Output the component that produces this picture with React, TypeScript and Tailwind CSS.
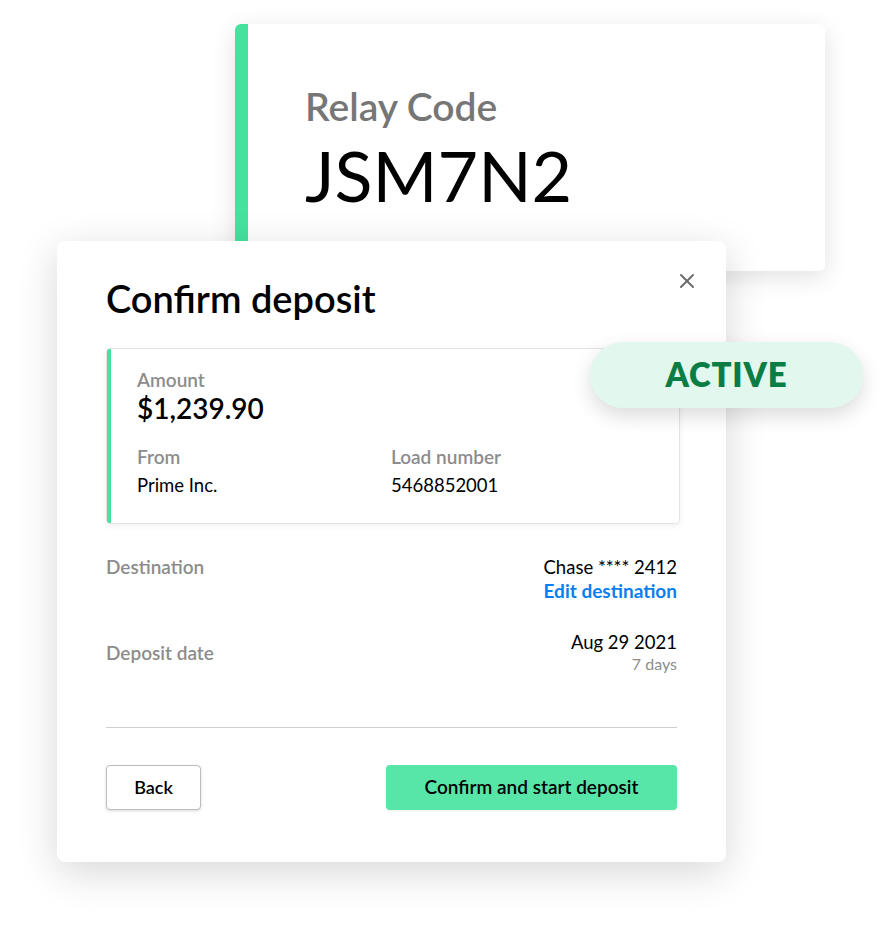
import React from 'react';
import { X } from 'lucide-react';

const font = { fontFamily: 'Lato, "Noto Sans", sans-serif' };

export default function App() {
  return (
    <div className="w-[888px] h-[928px] bg-white overflow-hidden pt-[24px]" style={font}>
      {/* Relay code card (behind) */}
      <div className="ml-[235px] w-[590px] h-[247px] bg-white rounded-md shadow-[0_6px_24px_rgba(0,0,0,0.12)] flex overflow-hidden">
        <div className="w-[13px] bg-[#45e29e]" />
        <div className="pl-[57px] pt-[59px]">
          <div className="text-[39px] leading-[46px] font-semibold text-[#767676]">Relay Code</div>
          <div className="text-[70px] leading-[80px] text-black mt-[6px]">JSM7N2</div>
        </div>
      </div>

      {/* Confirm deposit modal */}
      <div className="relative -mt-[30px] ml-[57px] w-[669px] h-[621px] bg-white rounded-lg shadow-[0_10px_40px_rgba(0,0,0,0.16)] pl-[49px] pr-[48px] pt-[34px]">
        <button className="absolute right-[27px] top-[28px] text-[#6b6b6b]">
          <X className="w-[24px] h-[24px]" strokeWidth={2} />
        </button>

        <h1 className="text-[38px] leading-[46px] font-semibold text-black">Confirm deposit</h1>

        <div className="mt-[27px] w-[574px] flex rounded border border-[#e3e3e3] shadow-[0_2px_6px_rgba(0,0,0,0.06)] overflow-hidden">
          <div className="w-[4px] bg-[#45e29e]" />
          <div className="flex-1 pl-[26px] pt-[20px] pb-[27px]">
            <div className="text-[19px] leading-[22px] font-semibold text-[#8c8c8c]">Amount</div>
            <div className="text-[28px] leading-[30px] font-semibold text-black mt-[2px]">$1,239.90</div>
            <div className="grid grid-cols-[254px_1fr] mt-[23px]">
              <div>
                <div className="text-[19px] leading-[22px] font-semibold text-[#8c8c8c]">From</div>
                <div className="text-[18.5px] leading-[22px] text-black mt-[6px]">Prime Inc.</div>
              </div>
              <div>
                <div className="text-[19px] leading-[22px] font-semibold text-[#8c8c8c]">Load number</div>
                <div className="text-[18.5px] leading-[22px] text-black mt-[6px]">5468852001</div>
              </div>
            </div>
          </div>
        </div>

        <div className="w-[571px] mt-[32px] flex justify-between">
          <div className="text-[19px] leading-[22px] font-semibold text-[#8c8c8c]">Destination</div>
          <div className="text-right">
            <div className="text-[18.5px] leading-[22px] text-black">Chase **** 2412</div>
            <div className="text-[19px] leading-[22px] font-bold text-[#0b7ff0] mt-[2px]">Edit destination</div>
          </div>
        </div>

        <div className="w-[571px] mt-[29px] flex justify-between items-start">
          <div className="text-[19px] leading-[22px] font-semibold text-[#8c8c8c] mt-[11px]">Deposit date</div>
          <div className="text-right">
            <div className="text-[18.5px] leading-[22px] text-black">Aug 29 2021</div>
            <div className="text-[16px] leading-[18px] text-[#8c8c8c] mt-[2px]">7 days</div>
          </div>
        </div>

        <div className="w-[571px] h-px bg-[#cfcfcf] mt-[54px]" />

        <div className="w-[571px] mt-[37px] flex justify-between">
          <button className="w-[95px] h-[45px] rounded border border-[#bdbdbd] bg-white shadow-[0_1px_3px_rgba(0,0,0,0.15)] text-[18px] font-semibold text-black">
            Back
          </button>
          <button className="w-[291px] h-[45px] rounded bg-[#58e6a8] shadow-[0_1px_3px_rgba(0,0,0,0.08)] text-[19px] font-semibold text-black">
            Confirm and start deposit
          </button>
        </div>

        {/* ACTIVE pill */}
        <div className="absolute left-[533px] top-[101px] w-[273px] h-[66px] rounded-full bg-[#e2f8ef] shadow-[0_8px_20px_rgba(0,0,0,0.14)] flex items-center justify-center">
          <span className="text-[33px] font-extrabold tracking-wide text-[#0a7d44]">ACTIVE</span>
        </div>
      </div>
    </div>
  );
}
